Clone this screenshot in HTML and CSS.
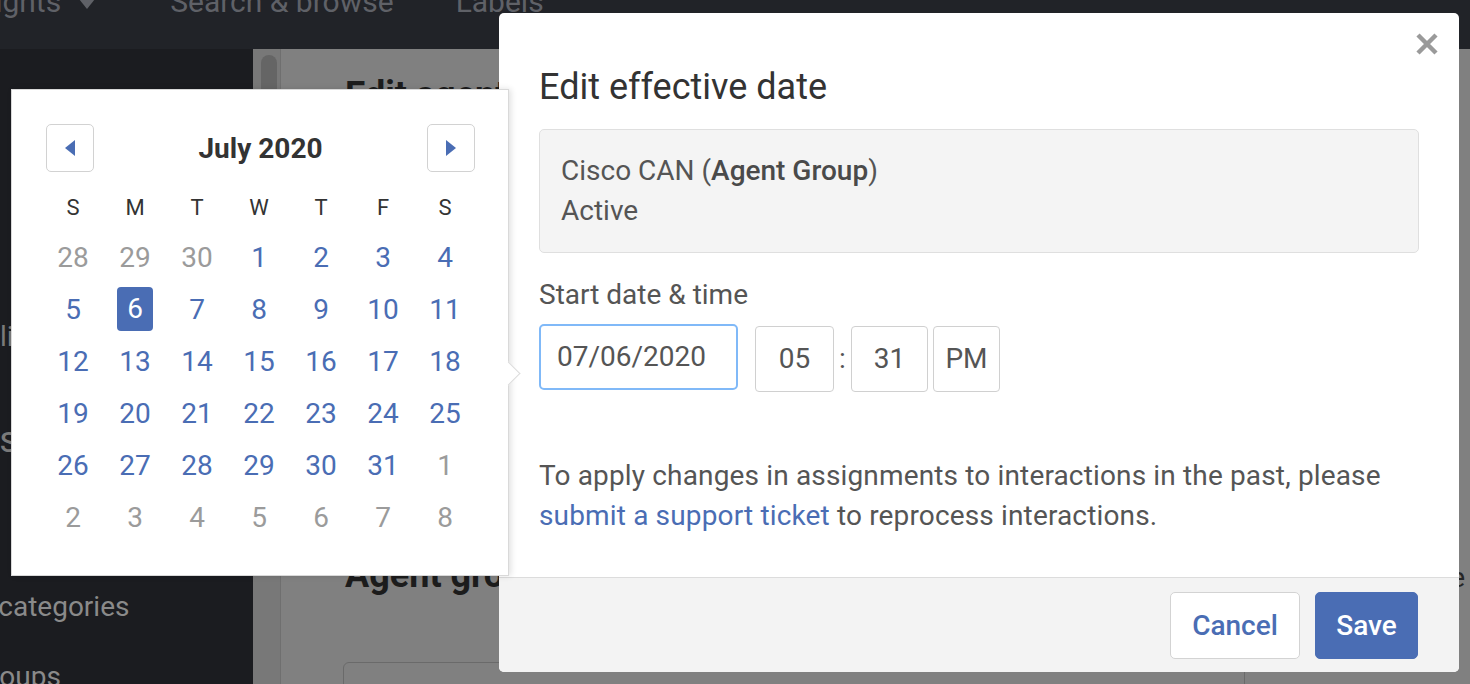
FILE: index.html
```html
<!DOCTYPE html>
<html lang="en">
<head>
<meta charset="utf-8">
<title>Edit effective date</title>
<link rel="stylesheet" href="styles.css">
</head>
<body>
<div class="app">
  <header class="topnav">
    <div class="topnav-inner">
      <span class="nav-item nav-first">Insights</span>
      <svg class="nav-caret" width="16" height="12" viewBox="0 0 16 12"><path d="M0 0 L16 0 L8 10 Z" fill="#5f6167"/></svg>
      <span class="nav-item nav-search">Search &amp; browse</span>
      <span class="nav-item nav-labels">Labels</span>
    </div>
  </header>
  <div class="layout">
    <aside class="sidebar">
      <div class="side-item side-1"><span class="clip-quality">Quality</span></div>
      <div class="side-item side-2">Settings</div>
      <div class="side-item side-3"><span class="clip-categories">Interaction categories</span></div>
      <div class="side-item side-4"><span class="clip-groups">Agent groups</span></div>
    </aside>
    <div class="track"><div class="thumb"></div></div>
    <main class="main">
      <h1 class="main-title">Edit agent group</h1>
      <div class="main-row">
        <h2 class="main-subtitle">Agent groups</h2>
        <span class="main-right">Change effective date</span>
      </div>
      <div class="main-input"></div>
    </main>
  </div>
</div>

<div class="datepicker">
  <div class="dp-header">
    <div class="dp-btn"><svg width="10" height="16" viewBox="0 0 10 16"><path d="M10 0 L10 16 L0 8 Z" fill="#4a6db4"/></svg></div>
    <div class="dp-title">July 2020</div>
    <div class="dp-btn"><svg width="10" height="16" viewBox="0 0 10 16"><path d="M0 0 L0 16 L10 8 Z" fill="#4a6db4"/></svg></div>
  </div>
  <div class="dp-weekdays">
    <span>S</span><span>M</span><span>T</span><span>W</span><span>T</span><span>F</span><span>S</span>
  </div>
  <div class="dp-days">
    <span class="d muted">28</span><span class="d muted">29</span><span class="d muted">30</span><span class="d">1</span><span class="d">2</span><span class="d">3</span><span class="d">4</span>
    <span class="d">5</span><span class="d"><span class="sel">6</span></span><span class="d">7</span><span class="d">8</span><span class="d">9</span><span class="d">10</span><span class="d">11</span>
    <span class="d">12</span><span class="d">13</span><span class="d">14</span><span class="d">15</span><span class="d">16</span><span class="d">17</span><span class="d">18</span>
    <span class="d">19</span><span class="d">20</span><span class="d">21</span><span class="d">22</span><span class="d">23</span><span class="d">24</span><span class="d">25</span>
    <span class="d">26</span><span class="d">27</span><span class="d">28</span><span class="d">29</span><span class="d">30</span><span class="d">31</span><span class="d muted">1</span>
    <span class="d muted">2</span><span class="d muted">3</span><span class="d muted">4</span><span class="d muted">5</span><span class="d muted">6</span><span class="d muted">7</span><span class="d muted">8</span>
  </div>
  <div class="dp-arrow"></div>
</div>

<div class="modal">
  <button class="modal-close" aria-label="Close">
    <svg width="22" height="22" viewBox="0 0 22 22"><path d="M2 2 L20 20 M20 2 L2 20" stroke="#9a9a9a" stroke-width="4.5"/></svg>
  </button>
  <div class="modal-body">
    <h2 class="modal-title">Edit effective date</h2>
    <div class="info-box">
      <div>Cisco CAN (<strong>Agent Group</strong>)</div>
      <div>Active</div>
    </div>
    <div class="field-label">Start date &amp; time</div>
    <div class="inputs">
      <div class="date-input">07/06/2020</div>
      <div class="time-input hour">05</div>
      <div class="colon">:</div>
      <div class="time-input minute">31</div>
      <div class="time-input ampm">PM</div>
    </div>
    <p class="note">To apply changes in assignments to interactions in the past, please <a class="link">submit a support ticket</a> to reprocess interactions.</p>
  </div>
  <div class="modal-footer">
    <button class="btn btn-cancel">Cancel</button>
    <button class="btn btn-save">Save</button>
  </div>
</div>
</body>
</html>
```

FILE: styles.css
```css
html, body {
  margin: 0;
  padding: 0;
}
body {
  width: 1470px;
  height: 684px;
  overflow: hidden;
  background: #808080;
  font-family: Roboto, "Liberation Sans", sans-serif;
  position: relative;
}

/* ---------- dimmed page behind ---------- */
.app {
  display: flex;
  flex-direction: column;
  height: 684px;
}
.topnav {
  height: 49px;
  flex-shrink: 0;
  background: #212328;
  overflow: hidden;
}
.topnav-inner {
  display: flex;
  align-items: flex-start;
  margin-top: -13px;
  font-size: 30px;
  line-height: 30px;
  color: #5f6167;
  white-space: nowrap;
}
.nav-first { margin-left: -45px; }
.nav-caret { margin-left: 18px; margin-top: 12px; flex-shrink: 0; }
.nav-search { margin-left: 75px; }
.nav-labels { margin-left: 62px; }

.layout {
  display: flex;
  flex: 1;
  min-height: 0;
}
.sidebar {
  width: 253px;
  flex-shrink: 0;
  background: #1b1c20;
  color: #8a8a8a;
  font-size: 28px;
  line-height: 40px;
  overflow: hidden;
  white-space: nowrap;
}
.side-item { height: 40px; }
.side-1 { margin-top: 268px; color: #7a7a7a; }
.side-2 { margin-top: 66px; color: #7a7a7a; font-weight: 500; }
.side-3 { margin-top: 124px; }
.side-4 { margin-top: 30px; }
.clip-quality { margin-left: -50px; }
.clip-categories { margin-left: -142px; }
.clip-groups { margin-left: -106px; }

.track {
  width: 27px;
  flex-shrink: 0;
  background: #787878;
  border-right: 1px solid #6f6f6f;
}
.thumb {
  margin: 6px 0 0 8px;
  width: 16px;
  height: 210px;
  border-radius: 8px;
  background: #656565;
}
.main {
  flex: 1;
  padding-left: 64px;
  overflow: hidden;
}
.main-title {
  margin: 24px 0 0;
  font-size: 36px;
  line-height: 44px;
  font-weight: 700;
  color: #1c1c1c;
}
.main-row {
  display: flex;
  justify-content: space-between;
  align-items: baseline;
  margin-top: 436px;
  padding-right: 5px;
}
.main-subtitle {
  margin: 0;
  font-size: 36px;
  line-height: 44px;
  font-weight: 700;
  color: #1c1c1c;
}
.main-right {
  font-size: 28px;
  color: #262626;
}
.main-input {
  margin: 65px 0 0 -2px;
  width: 900px;
  height: 60px;
  border: 1px solid #6a6a6a;
  border-radius: 6px;
}

/* ---------- date picker popover ---------- */
.datepicker {
  position: absolute;
  left: 11px;
  top: 89px;
  width: 434px;
  padding: 34px 32px 32px 30px;
  background: #fff;
  border: 1px solid #d9d9d9;
  box-shadow: 2px 0 6px rgba(0, 0, 0, 0.12);
  z-index: 3;
}
.dp-header {
  display: flex;
  justify-content: space-between;
  align-items: center;
  padding: 0 1px 0 4px;
  height: 48px;
}
.dp-btn {
  width: 46px;
  height: 46px;
  border: 1px solid #d2d2d2;
  border-radius: 5px;
  display: flex;
  align-items: center;
  justify-content: center;
}
.dp-title {
  font-size: 28px;
  font-weight: 700;
  color: #333;
}
.dp-weekdays {
  display: grid;
  grid-template-columns: repeat(7, 62px);
  margin-top: 13px;
  height: 46px;
  line-height: 46px;
  font-size: 22px;
  color: #333;
  text-align: center;
}
.dp-days {
  display: grid;
  grid-template-columns: repeat(7, 62px);
  grid-auto-rows: 52px;
  font-size: 28px;
  color: #4a6db4;
  text-align: center;
}
.d {
  display: flex;
  align-items: center;
  justify-content: center;
}
.d.muted { color: #9b9b9b; }
.sel {
  display: block;
  width: 36px;
  height: 44px;
  line-height: 44px;
  border-radius: 4px;
  background: #4a6db4;
  color: #fff;
}
.dp-arrow {
  position: absolute;
  right: -9px;
  top: 275px;
  width: 16px;
  height: 16px;
  background: #fff;
  border-top: 1px solid #dcdcdc;
  border-right: 1px solid #dcdcdc;
  transform: rotate(45deg);
}

/* ---------- modal ---------- */
.modal {
  position: absolute;
  left: 499px;
  top: 13px;
  width: 960px;
  height: 659px;
  background: #fff;
  border-radius: 5px;
  overflow: hidden;
  display: flex;
  flex-direction: column;
  z-index: 2;
}
.modal-close {
  position: absolute;
  right: 21px;
  top: 20px;
  width: 22px;
  height: 22px;
  padding: 0;
  border: 0;
  background: none;
}
.modal-close svg { display: block; }
.modal-body {
  flex: 1;
  padding: 52px 40px 40px;
  color: #555;
  font-size: 28px;
  line-height: 40px;
}
.modal-title {
  margin: 0;
  font-size: 36px;
  line-height: 44px;
  font-weight: 400;
  color: #333;
}
.info-box {
  margin-top: 20px;
  background: #f4f4f4;
  border: 1px solid #dfdfdf;
  border-radius: 5px;
  padding: 21px 21px;
}
.info-box strong {
  font-weight: 500;
  color: #4a4a4a;
}
.field-label {
  margin-top: 22px;
}
.inputs {
  display: flex;
  align-items: flex-start;
  margin-top: 9px;
}
.date-input {
  box-sizing: border-box;
  width: 199px;
  height: 66px;
  padding-left: 16px;
  border: 2px solid #80b9f8;
  border-radius: 5px;
  line-height: 62px;
}
.time-input {
  box-sizing: border-box;
  height: 66px;
  margin-top: 2px;
  border: 1px solid #d0d0d0;
  border-radius: 4px;
  line-height: 64px;
  text-align: center;
}
.hour { width: 79px; margin-left: 17px; }
.colon {
  width: 17px;
  margin-top: 2px;
  line-height: 66px;
  text-align: center;
}
.minute { width: 77px; }
.ampm { width: 67px; margin-left: 5px; }
.note {
  margin: 64px 0 0;
  letter-spacing: 0.15px;
}
.link {
  color: #4a6db4;
  text-decoration: none;
}
.modal-footer {
  border-top: 1px solid #dcdcdc;
  background: #f3f3f3;
  height: 95px;
  box-sizing: border-box;
  padding: 14px 41px 14px 0;
  display: flex;
  justify-content: flex-end;
  gap: 15px;
  flex-shrink: 0;
}
.btn {
  height: 67px;
  border-radius: 5px;
  font-family: Roboto, "Liberation Sans", sans-serif;
  font-size: 28px;
  font-weight: 500;
  padding: 0;
  cursor: pointer;
}
.btn-cancel {
  width: 130px;
  background: #fff;
  border: 1px solid #d3d3d3;
  color: #4a6db4;
}
.btn-save {
  width: 103px;
  background: #4a6db4;
  border: 1px solid #4a6db4;
  color: #fff;
}
```
